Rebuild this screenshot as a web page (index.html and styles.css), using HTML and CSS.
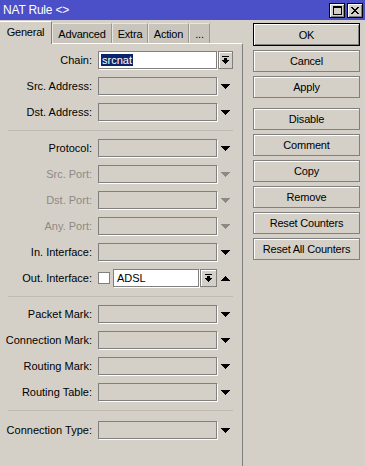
FILE: index.html
```html
<!DOCTYPE html>
<html>
<head>
<meta charset="utf-8">
<link rel="stylesheet" href="styles.css">
</head>
<body>
<div class="window">
  <div class="titlebar">
    <span class="title">NAT Rule &lt;&gt;</span>
    <div class="tbtns">
      <span class="tbtn"><svg width="9" height="9" viewBox="0 0 9 9" shape-rendering="crispEdges"><path d="M0 0h9v9H0zM1 2v6h7V2z" fill="#000" fill-rule="evenodd"/></svg></span>
      <span class="tbtn"><svg width="8" height="7" viewBox="0 0 8 7" shape-rendering="crispEdges"><path d="M0 0h2v1h1v1h2V1h1V0h2v1H7v1H6v1H5v1h1v1h1v1h1v1H6V6H5V5H3v1H2v1H0V6h1V5h1V4h1V3H2V2H1V1H0z" fill="#000"/></svg></span>
    </div>
  </div>
  <div class="main">
    <div class="left">
      <div class="tabs">
        <div class="tab active">General</div>
        <div class="tab t-adv">Advanced</div>
        <div class="tab t-extra">Extra</div>
        <div class="tab t-action">Action</div>
        <div class="tab t-more">...</div>
      </div>
      <div class="panel">
        <div class="row">
          <span class="label">Chain:</span>
          <div class="field white"><span class="sel">srcnat</span></div>
          <div class="ddbtn"><svg width="7" height="8" viewBox="0 0 7 8" shape-rendering="crispEdges"><path d="M0 0h7v1H0zM2 2h3v2H2zM0 4h7v1H0zM1 5h5v1H1zM2 6h3v1H2zM3 7h1v1H3z" fill="#000"/></svg></div>
        </div>
        <div class="row">
          <span class="label">Src. Address:</span>
          <div class="field"></div>
          <span class="arrow"><svg width="9" height="5" viewBox="0 0 9 5" shape-rendering="crispEdges"><path d="M0 0h9v1H0zM1 1h7v1H1zM2 2h5v1H2zM3 3h3v1H3zM4 4h1v1H4z"/></svg></span>
        </div>
        <div class="row">
          <span class="label">Dst. Address:</span>
          <div class="field"></div>
          <span class="arrow"><svg width="9" height="5" viewBox="0 0 9 5" shape-rendering="crispEdges"><path d="M0 0h9v1H0zM1 1h7v1H1zM2 2h5v1H2zM3 3h3v1H3zM4 4h1v1H4z"/></svg></span>
        </div>
        <div class="sep"></div>
        <div class="row">
          <span class="label">Protocol:</span>
          <div class="field"></div>
          <span class="arrow"><svg width="9" height="5" viewBox="0 0 9 5" shape-rendering="crispEdges"><path d="M0 0h9v1H0zM1 1h7v1H1zM2 2h5v1H2zM3 3h3v1H3zM4 4h1v1H4z"/></svg></span>
        </div>
        <div class="row disabled">
          <span class="label">Src. Port:</span>
          <div class="field"></div>
          <span class="arrow"><svg width="9" height="5" viewBox="0 0 9 5" shape-rendering="crispEdges"><path d="M0 0h9v1H0zM1 1h7v1H1zM2 2h5v1H2zM3 3h3v1H3zM4 4h1v1H4z"/></svg></span>
        </div>
        <div class="row disabled">
          <span class="label">Dst. Port:</span>
          <div class="field"></div>
          <span class="arrow"><svg width="9" height="5" viewBox="0 0 9 5" shape-rendering="crispEdges"><path d="M0 0h9v1H0zM1 1h7v1H1zM2 2h5v1H2zM3 3h3v1H3zM4 4h1v1H4z"/></svg></span>
        </div>
        <div class="row disabled">
          <span class="label">Any. Port:</span>
          <div class="field"></div>
          <span class="arrow"><svg width="9" height="5" viewBox="0 0 9 5" shape-rendering="crispEdges"><path d="M0 0h9v1H0zM1 1h7v1H1zM2 2h5v1H2zM3 3h3v1H3zM4 4h1v1H4z"/></svg></span>
        </div>
        <div class="row">
          <span class="label">In. Interface:</span>
          <div class="field"></div>
          <span class="arrow"><svg width="9" height="5" viewBox="0 0 9 5" shape-rendering="crispEdges"><path d="M0 0h9v1H0zM1 1h7v1H1zM2 2h5v1H2zM3 3h3v1H3zM4 4h1v1H4z"/></svg></span>
        </div>
        <div class="row">
          <span class="label">Out. Interface:</span>
          <div class="outgroup">
            <span class="check"></span>
            <div class="field white adsl">ADSL</div>
            <div class="ddbtn small"><svg width="7" height="8" viewBox="0 0 7 8" shape-rendering="crispEdges"><path d="M0 0h7v1H0zM2 2h3v2H2zM0 4h7v1H0zM1 5h5v1H1zM2 6h3v1H2zM3 7h1v1H3z" fill="#000"/></svg></div>
          </div>
          <span class="arrow"><svg width="9" height="5" viewBox="0 0 9 5" shape-rendering="crispEdges"><path d="M4 0h1v1H4zM3 1h3v1H3zM2 2h5v1H2zM1 3h7v1H1zM0 4h9v1H0z"/></svg></span>
        </div>
        <div class="sep"></div>
        <div class="row">
          <span class="label">Packet Mark:</span>
          <div class="field"></div>
          <span class="arrow"><svg width="9" height="5" viewBox="0 0 9 5" shape-rendering="crispEdges"><path d="M0 0h9v1H0zM1 1h7v1H1zM2 2h5v1H2zM3 3h3v1H3zM4 4h1v1H4z"/></svg></span>
        </div>
        <div class="row">
          <span class="label">Connection Mark:</span>
          <div class="field"></div>
          <span class="arrow"><svg width="9" height="5" viewBox="0 0 9 5" shape-rendering="crispEdges"><path d="M0 0h9v1H0zM1 1h7v1H1zM2 2h5v1H2zM3 3h3v1H3zM4 4h1v1H4z"/></svg></span>
        </div>
        <div class="row">
          <span class="label">Routing Mark:</span>
          <div class="field"></div>
          <span class="arrow"><svg width="9" height="5" viewBox="0 0 9 5" shape-rendering="crispEdges"><path d="M0 0h9v1H0zM1 1h7v1H1zM2 2h5v1H2zM3 3h3v1H3zM4 4h1v1H4z"/></svg></span>
        </div>
        <div class="row">
          <span class="label">Routing Table:</span>
          <div class="field"></div>
          <span class="arrow"><svg width="9" height="5" viewBox="0 0 9 5" shape-rendering="crispEdges"><path d="M0 0h9v1H0zM1 1h7v1H1zM2 2h5v1H2zM3 3h3v1H3zM4 4h1v1H4z"/></svg></span>
        </div>
        <div class="sep last"></div>
        <div class="row">
          <span class="label">Connection Type:</span>
          <div class="field"></div>
          <span class="arrow"><svg width="9" height="5" viewBox="0 0 9 5" shape-rendering="crispEdges"><path d="M0 0h9v1H0zM1 1h7v1H1zM2 2h5v1H2zM3 3h3v1H3zM4 4h1v1H4z"/></svg></span>
        </div>
      </div>
    </div>
    <div class="buttons">
      <div class="btn default">OK</div>
      <div class="btn">Cancel</div>
      <div class="btn">Apply</div>
      <div class="btn spaced">Disable</div>
      <div class="btn">Comment</div>
      <div class="btn">Copy</div>
      <div class="btn">Remove</div>
      <div class="btn">Reset Counters</div>
      <div class="btn">Reset All Counters</div>
    </div>
  </div>
</div>
</body>
</html>
```

FILE: styles.css
```css
html, body {
  margin: 0;
  padding: 0;
  background: #d4d0c8;
}
.window {
  width: 365px;
  height: 466px;
  overflow: hidden;
  display: flex;
  flex-direction: column;
  font-family: "Liberation Sans", Arial, sans-serif;
  font-size: 11px;
  color: #000;
}
.titlebar {
  height: 20px;
  background: #4b4fc8;
  display: flex;
  align-items: center;
  justify-content: space-between;
  padding: 0 2px 0 3px;
  flex: none;
}
.title {
  color: #fff;
  font-size: 12px;
  letter-spacing: -0.2px;
}
.tbtns {
  display: flex;
  gap: 2px;
}
.tbtn {
  width: 16px;
  height: 15px;
  box-sizing: border-box;
  background: #d4d0c8;
  border: 1px solid #000;
  box-shadow: inset 1px 1px 0 #fff, inset -1px -1px 0 #808080;
  display: flex;
  align-items: center;
  justify-content: center;
}
.main {
  flex: 1;
  display: flex;
  min-height: 0;
}
.left {
  width: 243px;
  display: flex;
  flex-direction: column;
  flex: none;
}
.tabs {
  height: 23px;
  display: flex;
  align-items: flex-end;
  padding-top: 1px;
  box-sizing: border-box;
}
.tab {
  height: 20px;
  box-sizing: border-box;
  background: #c9c5bd;
  border-top: 1px solid #e8e6e0;
  border-left: 1px solid #e8e6e0;
  border-right: 1px solid #9c9890;
  display: flex;
  align-items: center;
  justify-content: center;
  letter-spacing: -0.2px;
}
.tab.active {
  height: 23px;
  width: 52px;
  background: #d4d0c8;
  border-top: 1px solid #fff;
  border-left: none;
  border-right: 1px solid #808080;
  padding-bottom: 2px;
  margin-bottom: -1px;
  position: relative;
  z-index: 1;
}
.t-adv { width: 60px; }
.t-extra { width: 36px; }
.t-action { width: 41px; }
.t-more { width: 21px; }
.panel {
  flex: 1;
  border-top: 1px solid #fff;
  border-right: 1px solid #808080;
  display: flex;
  flex-direction: column;
  gap: 8px;
  padding-top: 7px;
}
.row {
  display: flex;
  align-items: center;
  height: 18px;
}
.label {
  width: 92px;
  text-align: right;
  margin-right: 6px;
  white-space: nowrap;
}
.row.disabled .label {
  color: #8c8a85;
}
.field {
  width: 119px;
  height: 18px;
  box-sizing: border-box;
  border: 1px solid #808080;
  box-shadow: 1px 1px 0 #fff;
  flex: none;
}
.field.white {
  background: #fff;
  display: flex;
  align-items: center;
  padding-left: 2px;
}
.sel {
  background: #0a246a;
  color: #fff;
  padding: 0 1px;
  line-height: 12px;
}
.ddbtn {
  width: 15px;
  height: 18px;
  box-sizing: border-box;
  margin-left: 1px;
  border: 1px solid #808080;
  box-shadow: inset 1px 1px 0 #fff;
  background: #d4d0c8;
  display: flex;
  align-items: center;
  justify-content: center;
}
.ddbtn.small {
  width: 17px;
  margin-left: 1px;
}
.arrow {
  width: 17px;
  display: flex;
  justify-content: center;
  fill: #000;
}
.row.disabled .arrow {
  fill: #8c8a85;
}
.outgroup {
  width: 119px;
  display: flex;
  align-items: center;
}
.check {
  width: 12px;
  height: 12px;
  box-sizing: border-box;
  background: #fff;
  border: 1px solid #808080;
  margin-right: 3px;
}
.field.adsl {
  width: 86px;
  padding-left: 3px;
}
.sep {
  height: 1px;
  margin: 1px 9px 0 8px;
  background: #bfbbb3;
}
.sep.last {
  margin-bottom: 2px;
}
.buttons {
  display: flex;
  flex-direction: column;
  gap: 4px;
  padding-top: 4px;
  margin-left: 10px;
  width: 107px;
}
.btn {
  height: 22px;
  box-sizing: border-box;
  border: 1px solid #808080;
  box-shadow: inset 1px 1px 0 #fff;
  display: flex;
  align-items: center;
  justify-content: center;
  letter-spacing: -0.2px;
}
.btn.default {
  height: 23px;
  border: 1px solid #000;
  box-shadow: inset 1px 1px 0 #fff, inset -1px -1px 0 #808080;
  margin-top: -1px;
}
.btn.spaced {
  margin-top: 6px;
}
```
